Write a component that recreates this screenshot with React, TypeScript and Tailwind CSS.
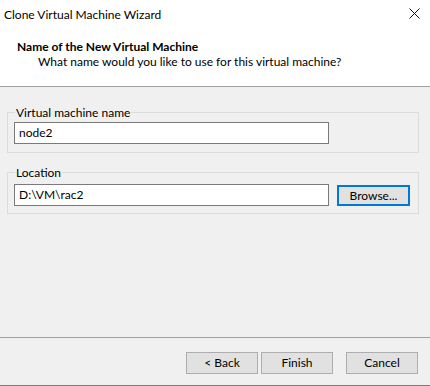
import React from "react";

const font = { fontFamily: 'Lato, "Noto Sans", "Liberation Sans", sans-serif' };

function Btn({ children, focused = false }: { children: React.ReactNode; focused?: boolean }) {
  return (
    <button
      className={
        focused
          ? "w-[73px] h-[21px] bg-[#e1e1e1] border-2 border-[#0078d7] text-[12px] leading-none text-black flex items-center justify-center"
          : "w-[72px] h-[22px] bg-[#e1e1e1] border border-[#adadad] text-[12px] leading-none text-black flex items-center justify-center"
      }
    >
      {children}
    </button>
  );
}

export default function App() {
  return (
    <div className="w-[430px] h-[386px] bg-[#f0f0f0] flex flex-col text-black overflow-hidden border-b border-[#7a7a7a]" style={font}>
      {/* Title bar */}
      <div className="h-[30px] bg-white flex items-center justify-between pl-[4px] pr-[10px]">
        <span className="text-[12px] leading-none -mt-[1px]">Clone Virtual Machine Wizard</span>
        <svg width="11" height="11" viewBox="0 0 11 11" className="-mt-[4px]">
          <path d="M0.5 0.5 L10.5 10.5 M10.5 0.5 L0.5 10.5" stroke="#111" strokeWidth="1" />
        </svg>
      </div>
      {/* Header */}
      <div className="h-[57px] bg-white border-b border-[#a0a0a0] pl-[17px] pt-[9px] flex flex-col">
        <div className="text-[12px] font-bold leading-[15px]">Name of the New Virtual Machine</div>
        <div className="text-[12px] leading-[15px] pl-[21px]">What name would you like to use for this virtual machine?</div>
      </div>
      {/* Body */}
      <div className="flex-1 flex flex-col px-[7px] pt-[25px]">
        <div className="relative h-[41px] w-[412px] border border-[#dcdcdc] pl-[6px] pt-[9px]">
          <span className="absolute left-[7px] -top-[8px] px-[1px] bg-[#f0f0f0] text-[12px] leading-[15px]">Virtual machine name</span>
          <div className="w-[315px] h-[22px] bg-white border border-[#7a7a7a] flex items-center pl-[4px] text-[12px]">node2</div>
        </div>
        <div className="relative h-[42px] w-[412px] mt-[19px] border border-[#dcdcdc] pl-[6px] pt-[11px] flex items-start">
          <span className="absolute left-[7px] -top-[8px] px-[1px] bg-[#f0f0f0] text-[12px] leading-[15px]">Location</span>
          <div className="w-[315px] h-[22px] bg-white border border-[#7a7a7a] flex items-center pl-[4px] text-[12px]">D:\VM\rac2</div>
          <div className="ml-[8px] mt-[1px]">
            <Btn focused>Browse...</Btn>
          </div>
        </div>
      </div>
      {/* Footer */}
      <div className="h-[48px] border-t border-[#a0a0a0] flex justify-end items-start pt-[14px] pr-[12px]">
        <div className="flex gap-[3px]">
          <Btn>&lt; Back</Btn>
          <Btn>Finish</Btn>
        </div>
        <div className="ml-[13px]">
          <Btn>Cancel</Btn>
        </div>
      </div>
    </div>
  );
}
